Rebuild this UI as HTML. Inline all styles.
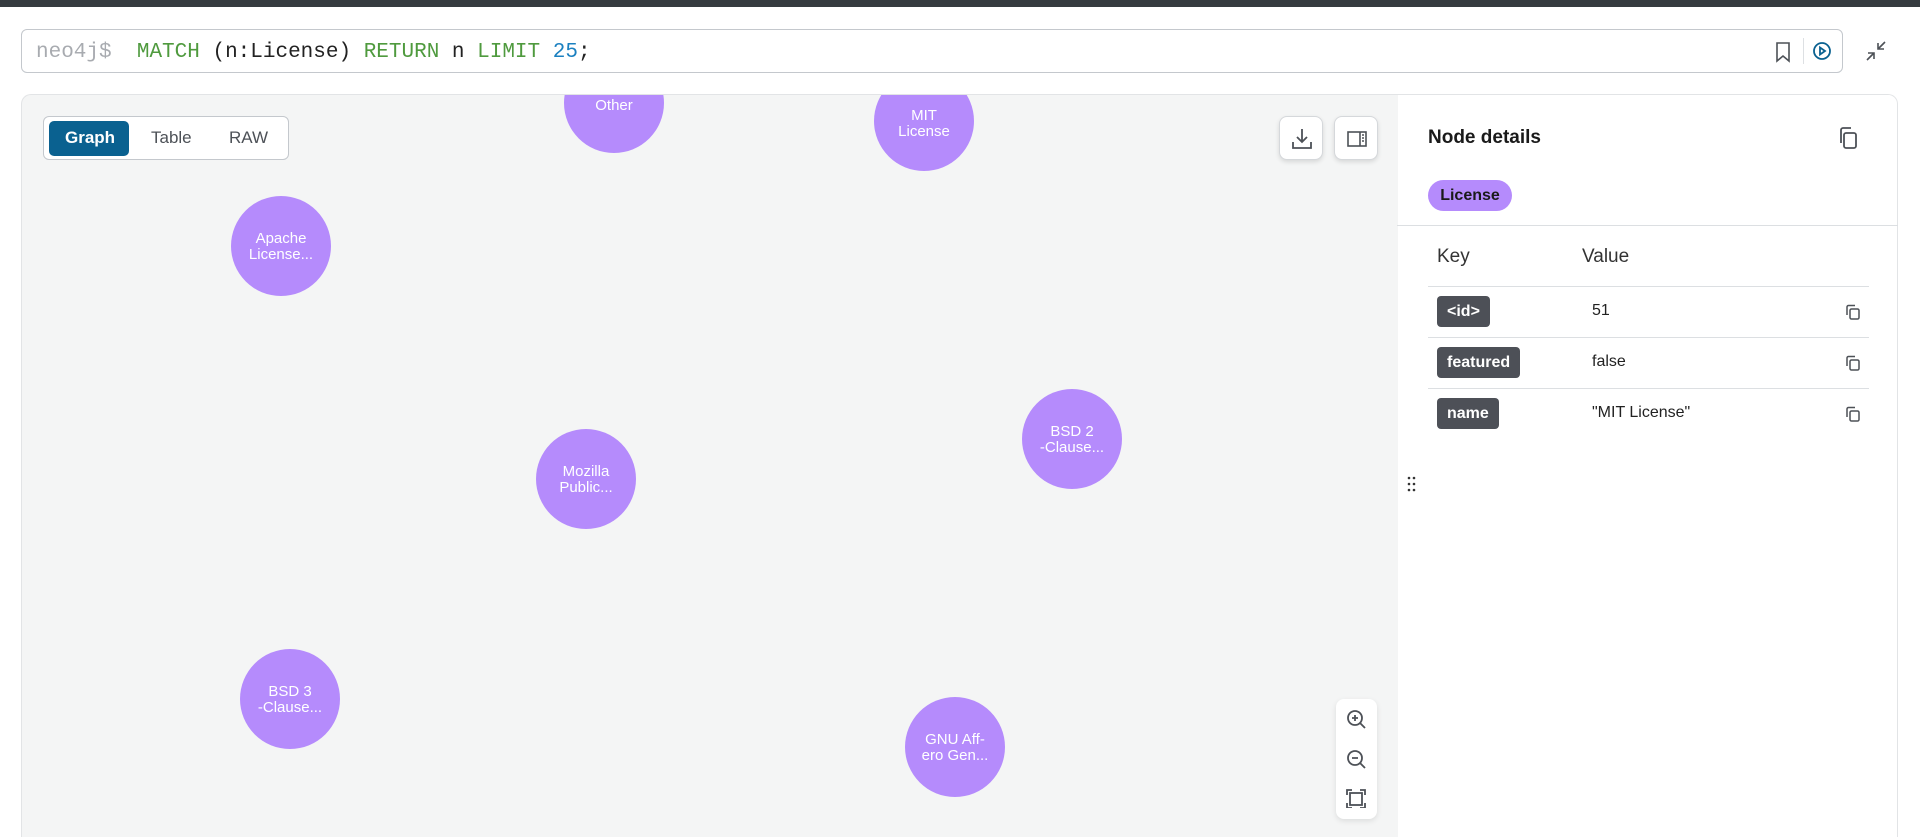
<!DOCTYPE html>
<html style="width:1920px;height:837px;overflow:hidden"><head><style>
*{box-sizing:border-box;margin:0;padding:0}
body{width:1920px;height:837px;overflow:hidden;background:#fff;font-family:"Liberation Sans",sans-serif;position:relative}
.top{position:absolute;left:0;top:0;width:1920px;height:7px;background:#353b3f}
.editor{position:absolute;left:21px;top:29px;width:1822px;height:44px;border:1px solid #c4c8cd;border-radius:6px;background:#fff}
.code{position:absolute;left:14px;top:11px;font-family:"Liberation Mono",monospace;font-size:21px;color:#222;white-space:pre}
.main{position:absolute;left:21px;top:94px;width:1877px;height:743px;border:1px solid #e2e4e6;border-bottom:none;border-radius:10px 10px 0 0;background:#f4f5f5;overflow:hidden}
.side{position:absolute;left:1376px;top:0;width:501px;height:100%;background:#fff}
.node{position:absolute;width:100px;height:100px;border-radius:50%;background:#b58bfc;color:#fff;font-size:15px;text-align:center;display:flex;align-items:center;justify-content:center;line-height:16px}
.seg{position:absolute;left:21px;top:21px;width:246px;height:44px;border:1px solid #c4c8cd;border-radius:6px;background:#fff;font-size:17px;color:#4d5157}
.seg span{position:absolute;top:11px}
.btn{position:absolute;top:21px;width:44px;height:44px;background:#fff;border:1px solid #d5d8db;border-radius:8px;box-shadow:0 2px 5px rgba(0,0,0,.12)}
.badge{position:absolute;left:1437px;height:31px;background:#4d5057;color:#fff;font-weight:bold;font-size:16px;border-radius:4px;padding:7px 10px 6px}
.val{position:absolute;left:1592px;font-size:16px;color:#222}
.line{position:absolute;left:1428px;width:441px;height:1px;background:#dcdfe2}
.cp{position:absolute;left:1845px}
</style></head><body>
<div class="top"></div>
<div class="editor">
<div class="code"><span style="color:#a8abb0">neo4j$</span>  <span style="color:#4f9a3e">MATCH</span> (n:License) <span style="color:#4f9a3e">RETURN</span> n <span style="color:#4f9a3e">LIMIT</span> <span style="color:#1b80c0">25</span>;</div>
<svg style="position:absolute;left:1751px;top:11px" width="20" height="22" viewBox="0 0 20 22" fill="none" stroke="#4d5157" stroke-width="1.6"><path d="M4 2h12v18l-6-5-6 5z"/></svg>
<div style="position:absolute;left:1781px;top:8px;width:1px;height:26px;background:#dde0e3"></div>
<svg style="position:absolute;left:1790px;top:11px" width="20" height="20" viewBox="0 0 20 20" fill="none" stroke="#0a6190" stroke-width="1.8"><circle cx="10" cy="10" r="8"/><path d="M8 6.5v7l5-3.5z"/></svg>
</div>
<svg style="position:absolute;left:1865px;top:40px" width="22" height="22" viewBox="0 0 22 22" fill="none" stroke="#4d5157" stroke-width="1.6"><path d="M20 2l-7 7M13 3v6h6M2 20l7-7M3 13h6v6"/></svg>
<div class="main">
<div class="node" style="left:542px;top:-42px;padding-top:6px">Other</div>
<div class="node" style="left:852px;top:-24px;padding-top:6px">MIT<br>License</div>
<div class="node" style="left:209px;top:101px;padding-top:2px">Apache<br>License...</div>
<div class="node" style="left:514px;top:334px;padding-top:2px">Mozilla<br>Public...</div>
<div class="node" style="left:1000px;top:294px;padding-top:2px">BSD 2<br>-Clause...</div>
<div class="node" style="left:218px;top:554px;padding-top:2px">BSD 3<br>-Clause...</div>
<div class="node" style="left:883px;top:602px;padding-top:2px">GNU Aff-<br>ero Gen...</div>
<div class="seg"><div style="position:absolute;left:5px;top:4px;width:80px;height:35px;background:#0a6190;border-radius:5px"></div><span style="left:21px;color:#fff;font-weight:bold">Graph</span><span style="left:107px">Table</span><span style="left:185px">RAW</span></div>
<div class="btn" style="left:1257px"><svg width="44" height="44" viewBox="0 0 44 44" fill="none" stroke="#4d5157" stroke-width="1.8"><path d="M22 12v13M17 20l5 5 5-5M13 25v6h18v-6"/></svg></div>
<div class="btn" style="left:1312px"><svg width="44" height="44" viewBox="0 0 44 44" fill="none" stroke="#4d5157" stroke-width="1.6"><rect x="13" y="15" width="18" height="14"/><path d="M25 15v14M27 18h2M27 21h2M27 24h2"/></svg></div>
<div style="position:absolute;left:1314px;top:604px;width:41px;height:120px;background:#fff;border-radius:8px;box-shadow:0 2px 6px rgba(0,0,0,.1)">
<svg style="position:absolute;left:9px;top:9px" width="24" height="100" viewBox="0 0 24 100" fill="none" stroke="#4d5157" stroke-width="1.8"><circle cx="10" cy="10" r="7"/><path d="M15 15l5 5M7 10h6M10 7v6"/><circle cx="10" cy="50" r="7"/><path d="M15 55l5 5M7 50h6"/><path d="M2 87v-5h5M15 82h5v5M20 95v5h-5M7 100H2v-5"/><rect x="5" y="85" width="12" height="12"/></svg></div>
<div class="side">
<svg style="position:absolute;left:9px;top:381px" width="10" height="16"><g fill="#333"><circle cx="2" cy="2" r="1.3"/><circle cx="7" cy="2" r="1.3"/><circle cx="2" cy="8" r="1.3"/><circle cx="7" cy="8" r="1.3"/><circle cx="2" cy="14" r="1.3"/><circle cx="7" cy="14" r="1.3"/></g></svg>
</div>
</div>
<div style="position:absolute;left:1428px;top:127px;font-size:19px;font-weight:bold;color:#1a1a1a">Node details</div>
<svg style="position:absolute;left:1836px;top:125px" width="24" height="26" viewBox="0 0 24 26" fill="none" stroke="#4d5157" stroke-width="1.8"><rect x="8" y="8" width="12" height="15" rx="2"/><path d="M5 18V5a2 2 0 0 1 2-2h8"/></svg>
<div style="position:absolute;left:1428px;top:180px;width:84px;height:31px;border-radius:16px;background:#b58bfc;font-size:16px;font-weight:bold;color:#1a1a1a;text-align:center;line-height:31px">License</div>
<div style="position:absolute;left:1397px;top:225px;width:501px;height:1px;background:#dcdfe2"></div>
<div style="position:absolute;left:1437px;top:246px;font-size:19px;color:#333">Key</div>
<div style="position:absolute;left:1582px;top:246px;font-size:19px;color:#333">Value</div>
<div class="line" style="top:286px"></div><div class="line" style="top:337px"></div><div class="line" style="top:388px"></div>
<div class="badge" style="top:296px">&lt;id&gt;</div><div class="val" style="top:302px">51</div>
<div class="badge" style="top:347px">featured</div><div class="val" style="top:353px">false</div>
<div class="badge" style="top:398px">name</div><div class="val" style="top:404px">"MIT License"</div>
<svg class="cp" style="top:304px" width="16" height="16" viewBox="0 0 16 16" fill="none" stroke="#4d5157" stroke-width="1.5"><rect x="5" y="5" width="9" height="10" rx="1.5"/><path d="M2 11V3a1.5 1.5 0 0 1 1.5-1.5H10"/></svg>
<svg class="cp" style="top:355px" width="16" height="16" viewBox="0 0 16 16" fill="none" stroke="#4d5157" stroke-width="1.5"><rect x="5" y="5" width="9" height="10" rx="1.5"/><path d="M2 11V3a1.5 1.5 0 0 1 1.5-1.5H10"/></svg>
<svg class="cp" style="top:406px" width="16" height="16" viewBox="0 0 16 16" fill="none" stroke="#4d5157" stroke-width="1.5"><rect x="5" y="5" width="9" height="10" rx="1.5"/><path d="M2 11V3a1.5 1.5 0 0 1 1.5-1.5H10"/></svg>
</body></html>
